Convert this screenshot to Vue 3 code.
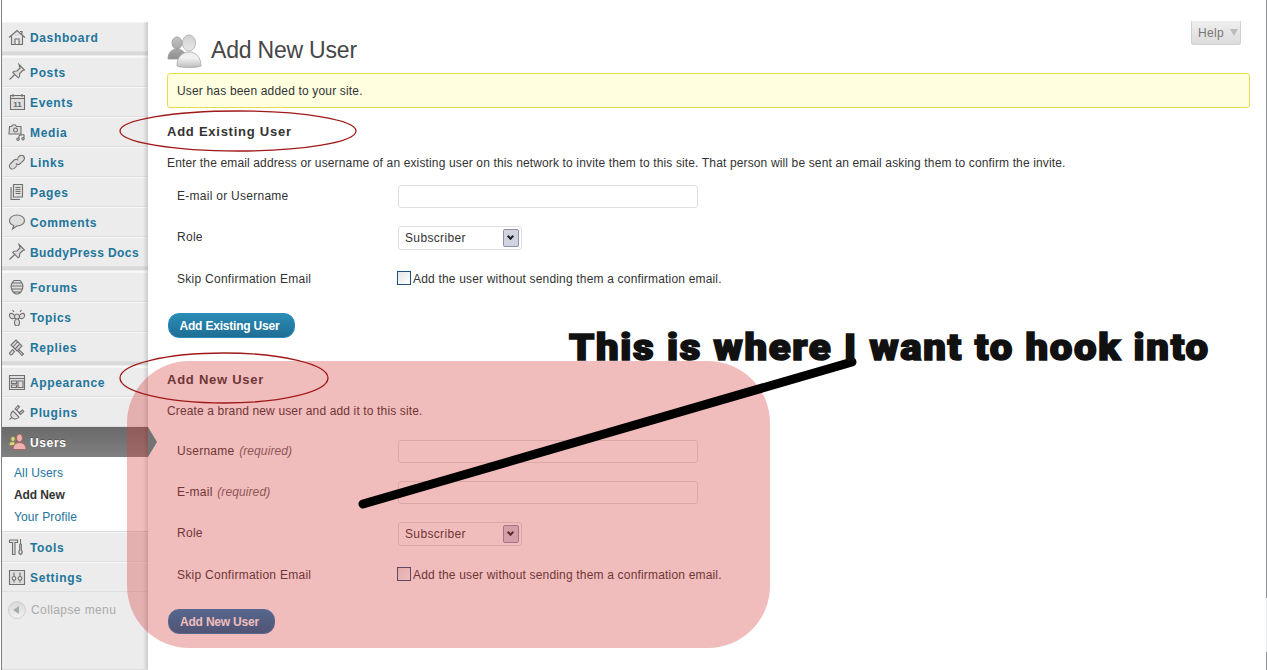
<script setup>
const groups = [
  [{ label: 'Dashboard', icon: 'home' }],
  [
    { label: 'Posts', icon: 'pin' },
    { label: 'Events', icon: 'calendar' },
    { label: 'Media', icon: 'media' },
    { label: 'Links', icon: 'links' },
    { label: 'Pages', icon: 'pages' },
    { label: 'Comments', icon: 'comments' },
    { label: 'BuddyPress Docs', icon: 'pin', tight: true }
  ],
  [
    { label: 'Forums', icon: 'forums' },
    { label: 'Topics', icon: 'topics' },
    { label: 'Replies', icon: 'replies' }
  ]
]
const icons = {
  home: 'M1 9.5 9 2.5l8 7M3.5 8v8.500h11V8M7 16.500V11h4v5.500M12 3.500h2v3',
  pin: 'M11 1.500l5.500 5.500-1.800.6-3 3-.2 3-1.300 1.200L4.800 9.400 6 8.200l3-.2 3-3zM6.800 11.500l-5.300 5',
  calendar: 'M2.500 2.500h14v14h-14zM2.500 5.500h14M5 1v3M14 1v3',
  media: 'M1.500 3.500h2l1-1.500h3l1 1.500h4.500v7.500h-12zM7.500 5a2 2 0 1 1-.01 0zM11 12.500v3M16 11.500v4M11 12.500l5-1M10 15a1.200 1.200 0 1 0 .01 0zM15 14.500a1.200 1.200 0 1 0 .01 0z',
  links: 'M9.500 5.500l2-2.500a3 3 0 0 1 4.500 3.800l-4 4a3 3 0 0 1-4-.3M9 12.500l-2.200 2.500A3 3 0 0 1 2.200 11l4-4a3 3 0 0 1 4 .3',
  pages: 'M5.500 1.500h9v12.500h-9zM3 4v12.500h9M7.500 4.500h5M7.500 6.500h5M7.500 8.500h5M7.500 10.500h5',
  comments: 'M9 2C4.800 2 1.500 4.400 1.500 7.500c0 2.300 1.800 4.200 4.300 5l-1.300 3.500 4.300-3H9c4.200 0 7.500-2.400 7.500-5.500S13.200 2 9 2z',
  forums: 'M6 2.500h6l2 2.500 1 3-.5 3-2 3.500-2.500 1.500H8L5.500 14.500l-2-3.500-.5-3 1-3zM4 5h10M3 8h12M3.500 11h11M5.500 14h7',
  topics: 'M9 6a2.500 2.500 0 1 1-.01 0zM9 11a2.500 3.500 0 1 1-.01 0zM7 8C4 4 1 5 1.500 8s3 3 5.500 2M11 8c3-4 6-3 5.500 0s-3 3-5.500 2M6 4 4.500 2M12 4l1.500-2',
  replies: 'M3 7 8 2l6 6-5 5zM5 9 9.500 4M7 11l4.500-4.500M10.500 11.500l5 4.500-1.500 1.500-4.500-5M4.500 11.500l-2 2.500a1.500 1.500 0 1 0 2 2l2-2.500z',
  appearance: 'M1.500 2.500h15v14h-15zM1.500 5.500h15M3.500 8h5v2.500h-5zM3.500 12h5v2.500h-5zM10 8h5v6.500h-5z',
  plugins: 'M5 8l6 6c-2 2.500-5 2.500-7 .6S2.500 10 5 8zM7 6l3-3.500 1.500 1.300L8.500 7.300zM11 10l3.500-3 1.300 1.500-3.300 3zM3.800 14.300 1.500 16.500M8 6.500l4 4',
  tools: 'M1.500 2h8v2.500H7v12H4.500v-12h-3zM12.500 1v4.500l-.8 1v5.500l-.7 1v2.500l1.500 1 1.500-1V13l-.7-1V6.500l-.8-1z',
  settings: 'M1.500 2.500h15v14h-15zM6 4.500v4M12 4.500v4M6 8.500a1.800 1.800 0 1 0 .01 0zM12 8.500a1.800 1.800 0 1 0 .01 0zM6 12v2.500M12 12v2.500'
}
const lower = [
  { label: 'Appearance', icon: 'appearance' },
  { label: 'Plugins', icon: 'plugins' }
]
const tail = [
  { label: 'Tools', icon: 'tools' },
  { label: 'Settings', icon: 'settings' }
]
const subItems = [
  { label: 'All Users', current: false },
  { label: 'Add New', current: true },
  { label: 'Your Profile', current: false }
]
const existingFields = [{ label: 'E-mail or Username' }]
const newFields = [
  { label: 'Username', note: '(required)' },
  { label: 'E-mail', note: '(required)' }
]
const skipText = 'Add the user without sending them a confirmation email.'
</script>

<template>
  <div class="page">
    <aside class="sidebar">
      <nav class="menu">
        <template v-for="(group, g) in groups" :key="g">
          <a v-for="item in group" :key="item.label" class="row" :class="{ tight: item.tight }">
            <svg class="ico" viewBox="0 0 18 18">
              <path :d="icons[item.icon]" />
              <text v-if="item.icon === 'calendar'" x="9.500" y="13.800" text-anchor="middle">11</text>
            </svg>
            <span>{{ item.label }}</span>
          </a>
          <div class="sep"></div>
        </template>
        <a v-for="item in lower" :key="item.label" class="row">
          <svg class="ico" viewBox="0 0 18 18"><path :d="icons[item.icon]" /></svg>
          <span>{{ item.label }}</span>
        </a>
        <a class="row active">
          <svg class="ico users" viewBox="0 0 18 18">
            <path class="small" d="M5 3.500a2.200 2.500 0 1 1-.01 0zM1 12.500c0-2.500 1.500-4 3.500-4s3 1.500 3 4z" />
            <path class="big" d="M11.500 1a3 4 0 1 1-.01 0zM5 16.500c0-4.500 2.500-7 6.500-7s6.500 2.500 6.500 7z" />
          </svg>
          <span>Users</span>
        </a>
        <ul class="sub">
          <li v-for="s in subItems" :key="s.label" :class="{ current: s.current }">{{ s.label }}</li>
        </ul>
        <a v-for="item in tail" :key="item.label" class="row">
          <svg class="ico" viewBox="0 0 18 18"><path :d="icons[item.icon]" /></svg>
          <span>{{ item.label }}</span>
        </a>
        <div class="collapse">
          <span class="collapse-btn"><i></i></span>
          <span>Collapse menu</span>
        </div>
      </nav>
    </aside>

    <main class="main">
      <header class="head">
        <svg class="head-ico" viewBox="0 0 36 34">
          <defs>
            <linearGradient id="back" x1="0" y1="0" x2="0" y2="1">
              <stop offset="0" stop-color="#c4c4c4" />
              <stop offset="1" stop-color="#8f8f8f" />
            </linearGradient>
            <linearGradient id="front" x1="0" y1="0" x2="0" y2="1">
              <stop offset="0" stop-color="#d0d0d0" />
              <stop offset=".7" stop-color="#f2f2f2" />
              <stop offset="1" stop-color="#bdbdbd" />
            </linearGradient>
          </defs>
          <path class="f2" d="M10 3a5 6 0 1 1-.01 0zM1 25c0-6 3.500-10 9-10s9 4 9 10z" />
          <path class="f1" d="M22 1a6.500 8 0 1 1-.01 0zM10 32c0-9 5-14 12-14s12 5 12 14c-4 2-20 2-24 0z" />
        </svg>
        <h1>Add New User</h1>
        <button class="help">Help <i></i></button>
      </header>

      <div class="notice">User has been added to your site.</div>

      <section class="existing">
        <h3>Add Existing User</h3>
        <p>Enter the email address or username of an existing user on this network to invite them to this site. That person will be sent an email asking them to confirm the invite.</p>
        <div class="form">
          <label v-for="f in existingFields" :key="f.label" class="field">
            <span class="lab">{{ f.label }}</span>
            <input type="text" />
          </label>
          <label class="field">
            <span class="lab">Role</span>
            <span class="sel"><select><option>Subscriber</option></select><b></b></span>
          </label>
          <label class="field skip">
            <span class="lab">Skip Confirmation Email</span>
            <input type="checkbox" /><span class="cbtext">{{ skipText }}</span>
          </label>
        </div>
        <button class="primary first">Add Existing User</button>
      </section>

      <section class="fresh">
        <h3>Add New User</h3>
        <p>Create a brand new user and add it to this site.</p>
        <div class="form">
          <label v-for="f in newFields" :key="f.label" class="field">
            <span class="lab">{{ f.label }} <em>{{ f.note }}</em></span>
            <input type="text" />
          </label>
          <label class="field">
            <span class="lab">Role</span>
            <span class="sel"><select><option>Subscriber</option></select><b></b></span>
          </label>
          <label class="field skip">
            <span class="lab">Skip Confirmation Email</span>
            <input type="checkbox" /><span class="cbtext">{{ skipText }}</span>
          </label>
        </div>
        <button class="primary second">Add New User</button>
      </section>
    </main>

    <div class="blob"></div>
    <svg class="marks" viewBox="0 0 1267 670">
      <ellipse cx="238" cy="131" rx="118" ry="20" />
      <ellipse cx="224" cy="378" rx="104" ry="25" />
      <path class="slash" d="M363 504 L852 362" />
    </svg>
    <div class="shout">This is where I want to hook into</div>
    <div class="edge"></div>
  </div>
</template>

<style scoped>
.page {
  position: relative;
  display: flex;
  width: 1267px;
  height: 670px;
  overflow: hidden;
  background: #fff;
  font-family: "Liberation Sans", Arial, sans-serif;
  font-size: 12px;
  color: #333;
}
.sidebar {
  flex: none;
  width: 146px;
  margin-left: 1px;
  padding-top: 22px;
  border-left: 1px solid #7f7f7f;
  box-sizing: content-box;
}
.menu {
  position: relative;
  height: 647px;
  background: #ececec;
  border-bottom: 1px solid #ddd;
}
.menu::after {
  content: "";
  position: absolute;
  top: 0;
  right: 0;
  bottom: 0;
  width: 5px;
  background: linear-gradient(to right, rgba(0, 0, 0, 0), rgba(0, 0, 0, .14));
  pointer-events: none;
}
.row {
  position: relative;
  display: flex;
  align-items: center;
  box-sizing: border-box;
  height: 30px;
  padding-left: 6px;
  font-weight: 700;
  font-size: 12px;
  letter-spacing: .64px;
  color: #21759b;
  border-top: 1px solid #f6f6f6;
  border-bottom: 1px solid #dfdfdf;
}
.row.tight {
  letter-spacing: .42px;
}
.row span {
  margin-left: 4px;
  padding-top: 2px;
}
.ico {
  flex: none;
  width: 18px;
  height: 18px;
}
.ico path {
  fill: #dedede;
  stroke: #707070;
  stroke-width: 1.100;
}
.ico text {
  font-size: 8px;
  font-weight: 700;
  letter-spacing: 0;
  fill: #666;
}
.sep {
  height: 5px;
  background: linear-gradient(#d9d9d9 0, #d9d9d9 3px, #ececec 3px, #ececec 4px, #f8f8f8 4px);
}
.active {
  height: 30px;
  color: #fff;
  background: linear-gradient(#6a6a6a, #808080);
  border: 0;
  text-shadow: 0 -1px 0 rgba(0, 0, 0, .3);
}
.active::after {
  content: "";
  position: absolute;
  z-index: 1;
  left: 100%;
  top: 0;
  width: 0;
  height: 0;
  border-top: 15px solid transparent;
  border-bottom: 15px solid transparent;
  border-left: 9px solid #747474;
}
.ico.users .small {
  fill: #d8d48a;
  stroke: #8a8a50;
}
.ico.users .big {
  fill: #eeb2ae;
  stroke: #a06a68;
}
.sub {
  list-style: none;
  margin: 0;
  padding: 5px 0 3px 12px;
  height: 75px;
  box-sizing: border-box;
  background: #fff;
  border-bottom: 1px solid #d9d9d9;
}
.sub li {
  height: 22px;
  line-height: 22px;
  color: #21759b;
  letter-spacing: .12px;
}
.sub li.current {
  color: #333;
  font-weight: 700;
  letter-spacing: -.1px;
}
.collapse {
  display: flex;
  align-items: center;
  height: 36px;
  padding-left: 6px;
  color: #aaa;
  letter-spacing: .4px;
}
.collapse-btn {
  display: flex;
  align-items: center;
  justify-content: center;
  width: 16px;
  height: 16px;
  margin-right: 5px;
  border-radius: 50%;
  background: linear-gradient(#d8d8d8, #f2f2f2);
  border: 1px solid #d0d0d0;
}
.collapse-btn i {
  width: 0;
  height: 0;
  margin-left: -2px;
  border-top: 4px solid transparent;
  border-bottom: 4px solid transparent;
  border-right: 6px solid #aaa;
}
.main {
  flex: 1;
  min-width: 0;
  padding: 0 17px 0 19px;
}
.head {
  display: flex;
  align-items: flex-start;
  height: 73px;
  box-sizing: border-box;
  padding-top: 21px;
}
.head-ico {
  flex: none;
  width: 36px;
  height: 34px;
  margin: 13px 8px 0 0;
}
.head-ico .f1 {
  fill: url(#front);
  stroke: #aaa;
  stroke-width: .8;
}
.head-ico .f2 {
  fill: url(#back);
  stroke: #999;
  stroke-width: .8;
}
h1 {
  flex: 1;
  margin: 15px 0 0;
  font-size: 23px;
  line-height: 28px;
  font-weight: 400;
  letter-spacing: -.2px;
  color: #464646;
}
.help {
  flex: none;
  display: flex;
  align-items: center;
  gap: 6px;
  width: 50px;
  height: 24px;
  margin-right: 9px;
  padding: 0 0 0 6px;
  font: 12px "Liberation Sans", Arial, sans-serif;
  letter-spacing: .3px;
  color: #777;
  background: linear-gradient(#efefef, #dcdcdc);
  border: 1px solid #d0d0d0;
  border-top: 0;
  border-radius: 0 0 3px 3px;
}
.help i {
  width: 0;
  height: 0;
  border-left: 4px solid transparent;
  border-right: 4px solid transparent;
  border-top: 7px solid #bbb;
}
.notice {
  box-sizing: border-box;
  height: 35px;
  line-height: 35px;
  padding-left: 9px;
  background: #ffffe0;
  border: 1px solid #e6db55;
  border-radius: 3px;
  letter-spacing: .17px;
}
h3 {
  margin: 0;
  font-size: 13px;
  line-height: 16px;
  font-weight: 700;
  letter-spacing: .75px;
  color: #333;
}
section p {
  margin: 0;
  letter-spacing: .14px;
  line-height: 16px;
}
.existing {
  padding-top: 16px;
}
.existing p {
  margin-top: 15px;
}
.fresh {
  padding-top: 34px;
}
.fresh p {
  margin-top: 15px;
}
.form {
  margin-top: 21px;
  display: flex;
  flex-direction: column;
}
.existing .form {
  margin-top: 14px;
}
.field {
  display: flex;
  align-items: center;
  height: 23px;
  margin-bottom: 18px;
  padding-left: 10px;
  letter-spacing: .27px;
}
.lab {
  flex: none;
  width: 221px;
  margin-top: -1px;
}
.skip .lab {
  margin-top: 0;
}
.lab em {
  margin-left: 1px;
  color: #666;
  font-size: 12px;
  letter-spacing: .1px;
}
input[type="text"] {
  box-sizing: border-box;
  width: 300px;
  height: 23px;
  padding: 0 6px;
  background: #fff;
  border: 1px solid #dfdfdf;
  border-radius: 3px;
}
.sel {
  position: relative;
  display: block;
  width: 124px;
  height: 24px;
}
.sel select {
  appearance: none;
  display: block;
  box-sizing: border-box;
  width: 100%;
  height: 100%;
  padding: 0 0 0 6px;
  font: 12px "Liberation Sans", Arial, sans-serif;
  letter-spacing: .35px;
  color: #333;
  background: #fff;
  border: 1px solid #dfdfdf;
  border-radius: 3px;
}
.sel b {
  position: absolute;
  top: 3px;
  right: 3px;
  box-sizing: border-box;
  width: 16px;
  height: 18px;
  background: #d2d3e0;
  border: 1px solid #8f90a8;
  border-radius: 2px;
}
.sel b::after {
  content: "";
  position: absolute;
  left: 4px;
  top: 4px;
  width: 3px;
  height: 3px;
  border-right: 2px solid #222;
  border-bottom: 2px solid #222;
  transform: rotate(45deg);
}
.skip input {
  appearance: none;
  flex: none;
  box-sizing: border-box;
  width: 14px;
  height: 14px;
  margin: -1px 2px 0 -1px;
  background: linear-gradient(135deg, #e6e6e6, #fff);
  border: 1.500px solid #1c5180;
}
.cbtext {
  margin-top: 0;
  letter-spacing: .18px;
}
.primary {
  display: block;
  box-sizing: border-box;
  height: 25px;
  padding: 1px 4px 0 0;
  margin-left: 1px;
  font: 700 12px "Liberation Sans", Arial, sans-serif;
  letter-spacing: -.2px;
  color: #fff;
  border-radius: 11px;
}
.first {
  width: 127px;
  margin-top: 5px;
  background: linear-gradient(#2a8cb5, #1f6e96);
  border: 1px solid #298cba;
}
.second {
  width: 107px;
  margin-top: 5px;
  background: linear-gradient(#107cb6, #0a5f92);
  border: 1px solid #1480b8;
}
.blob {
  position: absolute;
  left: 127px;
  top: 361px;
  width: 643px;
  height: 287px;
  border-radius: 62px;
  background: rgba(215, 64, 64, .35);
  pointer-events: none;
}
.marks {
  position: absolute;
  left: 0;
  top: 0;
  width: 1267px;
  height: 670px;
  pointer-events: none;
}
.marks ellipse {
  fill: none;
  stroke: #a01818;
  stroke-width: 1.300;
}
.marks .slash {
  fill: none;
  stroke: #000;
  stroke-width: 9;
  stroke-linecap: round;
}
.shout {
  position: absolute;
  left: 569px;
  top: 327px;
  font-family: Roboto, "Liberation Sans", sans-serif;
  font-weight: 900;
  font-size: 36px;
  line-height: 42px;
  letter-spacing: 1.500px;
  white-space: nowrap;
  color: #111;
  -webkit-text-stroke: 1.600px #111;
  transform: scaleX(1.115);
  transform-origin: left center;
}
.edge {
  position: absolute;
  right: 0;
  top: 0;
  bottom: 0;
  width: 1px;
  background: linear-gradient(#8f8f9a 0, #8f8f9a 598px, #e6e6f0 598px, #e6e6f0 652px, #8f8f9a 652px);
}
</style>
